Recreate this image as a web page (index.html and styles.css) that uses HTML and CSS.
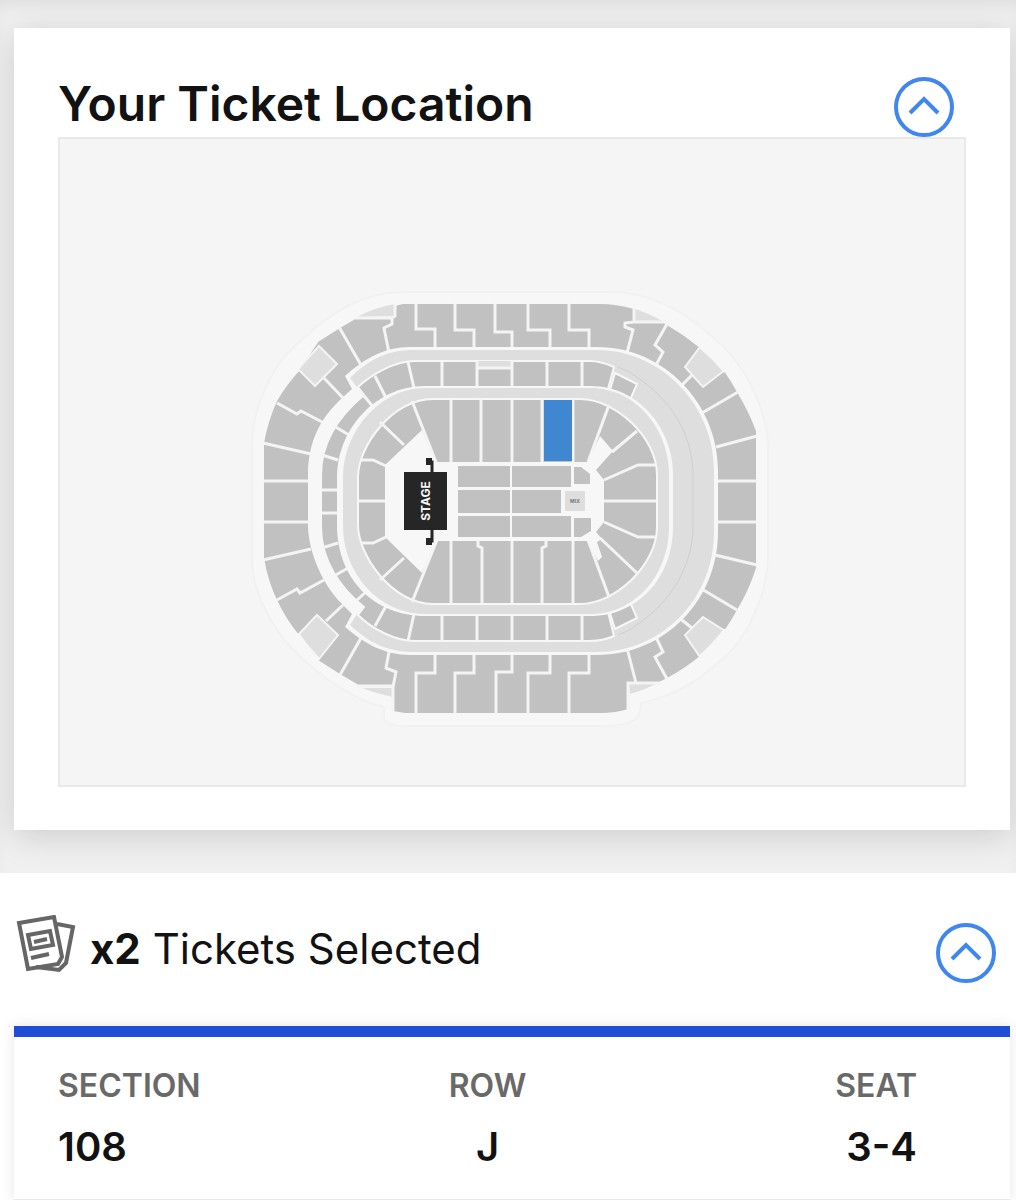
FILE: index.html
```html
<!DOCTYPE html>
<html lang="en">
<head>
  <meta charset="UTF-8">
  <meta name="viewport" content="width=device-width, initial-scale=1.0">
  <title>Your Tickets</title>
  <link rel="stylesheet" href="styles.css">
</head>
<body>
  <main>
    <div class="location-area">
      <section class="location-card">
        <div class="location-header">
          <h1>Your Ticket Location</h1>
          <button type="button" class="toggle" aria-label="Collapse ticket location">
            <svg viewBox="0 0 60 60"><circle cx="30" cy="30" r="28"/><path d="M16 36 L30 22 L44 36"/></svg>
          </button>
        </div>

        <div class="seat-map">
          <svg viewBox="60 139 904 646" role="img" aria-label="Seat map, section 108 highlighted">
            <!-- building outline -->
            <path class="building" d="M403 292 H612 C650 292 685 312 710 335 C745 362 768 410 768 450 V555 C768 590 750 640 715 665 C690 688 665 698 641 703 C642 716 635 726 605 726 H405 Q385 726 384 718 V707 C355 700 325 680 302 658 C270 630 252 590 252 560 V445 C252 405 275 360 302 340 C330 312 365 292 403 292 Z"/>

            <!-- upper bowl -->
            <path class="seats" d="M403 304 H600 Q616 304 634 309 Q652 315 667 325 Q684 335 700 348 Q713 359 724 371 Q731 381 737 392 Q749 412 756 431 V568 Q749 590 737 610 Q731 621 724 631 Q713 644 700 656 Q684 669 667 678 L655 684 H628 V709 Q616 713 600 713 H405 L393 711 V687 H362 L340 674 L318 660 Q307 648 299 635 Q286 619 278 602 Q268 582 264 558 V443 Q268 421 277 401 Q287 384 300 370 L318 342 L340 328 L357 318 L395 317 V306 Z"/>
            <g class="concourse">
              <path d="M357 317 Q376 307 395 304 V316 Z"/>
              <path d="M635 309 Q650 314 662 321 H635 Z"/>
              <path d="M362 688 H393 V697 Q377 694 362 688 Z"/>
              <path d="M629 684 H656 Q644 690 630 694 Z"/>
              <path class="cut" d="M319 346 L337 364 L315 386 L298 369 Z"/>
              <path class="cut" d="M317 615 L338 635 L319 659 L298 635 Z"/>
              <path class="cut" d="M700 347 L725 370 L703 387 L685 367 Z"/>
              <path class="cut" d="M703 617 L725 631 L700 657 L685 635 Z"/>
            </g>
            <!-- soft edge over the corner boxes -->
            <path class="apron" d="M316 341 Q305 354 296 370 M297 634 Q306 648 318 661 M701 346 Q714 357 726 371 M726 630 Q714 646 700 658"/>
            <g class="aisles">
              <path d="M416 303 V329 H435 V349 M455 303 V330 H474 V349 M495 303 V332 H512 V349 M528 303 V330 H550 V349 M569 303 V330 H589 V349"/>
              <path d="M395 304 V316 L392 318 V324 L384 328 L389 353 M355 318 H393 M339 327 L361 365 M324 378 L343 398"/>
              <path d="M277 403 L297 414 L301 411 L324 423 M263 443 L311 454 M263 481 H308 M263 522 H308 M263 560 L311 549 M277 600 L297 589 L300 593 L324 580"/>
              <path d="M326 621 L343 605 M361 638 L340 675 M389 652 L386 668 L396 672 L393 687 V711 M358 686 H393"/>
              <path d="M435 653 V673 H416 V714 M474 653 V673 H455 V714 M512 653 V672 H496 V714 M550 653 V673 H528 V714 M589 653 V673 H569 V714"/>
              <path d="M627 648 L636 683 M628 709 V683 H660 M655 635 L663 652 L655 657 L667 679 M678 617 L692 628 M700 588 L737 610 M715 555 L757 565 M718 522 H757"/>
              <path d="M716 447 L757 436 M718 481 H757 M702 413 L738 392 M680 387 L692 375 M667 324 L655 345 L663 352 L655 367 M634 308 V322 L625 323 V327 L633 330 L627 353 M633 322 H666"/>
            </g>

            <!-- club level -->
            <path class="gap" d="M410 347 H597 C665 347 718 405 718 470 V532 C718 600 665 655 597 655 H410 C385 655 365 644 345 627 L352 614 L342 604 C318 580 308 545 308 525 V475 C308 445 318 420 342 398 L352 389 L345 376 C365 358 385 347 410 347 Z"/>
            <path class="concourse" d="M350 378 C370 358 390 350 413 350 H597 C663 350 714 407 714 470 V532 C714 598 663 652 597 652 H413 C390 652 370 644 350 625 L357 614 H450 V387 H357 Z"/>
            <path class="seats ringed" d="M614 367 C605 363 595 361 590 361 H415 C395 361 372 374 358 387 L364 395 C340 415 321 440 321 475 V527 C321 560 340 588 364 607 L358 615 C372 629 395 641 415 641 H590 C595 641 605 640 614 636 L605 600 V400 Z"/>
            <path class="seats ringed" d="M615 373 L637 384 L630 400 L610 390 Z M610 613 L630 602 L637 618 L615 629 Z"/>
            <path class="concourse" d="M478 361 H511 V367 H478 Z"/>
            <g class="aisles">
              <path d="M408 362 L414 388 M442 361 V388 M477 361 V388 M477 368 H512 M512 361 V388 M547 361 V388 M582 361 V388"/>
              <path d="M408 641 L414 614 M442 614 V641 M477 614 V641 M512 614 V641 M547 614 V641 M582 614 V641"/>
              <path d="M375 376 L386 398 M360 391 L374 408 M334 426 L349 435 M322 455 L338 460 M321 490 H338 M321 513 H338 M322 548 L338 543 M334 576 L348 568 M357 600 L367 591 M375 626 L386 606"/>
            </g>
            <path class="rail" d="M618 367 Q630 371 641 380 C680 408 693 445 693 475 V527 C693 560 676 598 638 624 Q630 631 618 635"/>

            <!-- lower bowl -->
            <path class="gap" d="M425 386 H590 C640 386 673 430 673 475 V527 C673 575 640 616 590 616 H425 C375 616 337 580 337 525 V477 C337 430 375 386 425 386 Z"/>
            <path class="concourse" d="M425 388 H590 C637 388 669 430 669 475 V527 C669 573 637 614 590 614 H425 C380 614 343 575 343 525 V477 C343 432 380 388 425 388 Z"/>
            <path class="seats ringed" d="M433 399 H580 C615 399 657 437 657 475 V527 C657 565 615 604 580 604 H433 C392 604 358 555 358 525 V477 C358 447 392 399 433 399 Z"/>
            <g class="aisles">
              <path d="M412 401 L436 462 M451 399 V462 M481 399 V462 M512 399 V462 M542 399 V462 M573 399 V462 M609 405 L588 462 M637 431 L612 452 M656 465 H638 L604 480 M604 501 H656"/>
              <path d="M412 602 L437 540 M451 540 V604 M478 540 V546 L482 548 V604 M512 540 V604 M546 540 V546 L542 548 V604 M573 540 V604 M609 597 L588 540 M638 574 L600 538 M656 537 H638 L604 522"/>
              <path d="M380 422 L404 445 M361 460 H373 L386 466 M358 501 H385 M361 543 H373 L386 537 M380 580 L404 558"/>
            </g>

            <!-- floor -->
            <path class="gap" d="M385 465 L422 430 L435 462 H588 L600 436 L613 451 L596 470 L604 480 V522 L596 532 L602 539 L597 542 L602 557 L598 561 L588 541 H437 L422 573 L385 537 Z"/>
            <path class="seats" d="M458 466 H510 V487 H458 Z M512 466 H571 V487 H512 Z M458 490 H510 V513 H458 Z M512 490 H561 V513 H512 Z M458 516 H510 V537 H458 Z M512 516 H571 V537 H512 Z M574 467 H581 L590 474 V484 H574 Z M574 518 H591 V531 L581 537 H574 Z"/>
            <path class="concourse" d="M565 491 H585 V511 H565 Z"/>
            <text class="mix-label" x="575" y="503">MIX</text>

            <rect class="selected" x="544" y="400" width="28" height="61"/>

            <rect class="stage" x="404" y="472" width="43" height="58"/>
            <path class="stage-truss" d="M432 473 V462 H427 M432 529 V541 H427"/>
            <path class="stage" d="M426 458 h6 v7 h-6 Z M426 538 h6 v7 h-6 Z"/>
            <text class="stage-label" transform="translate(430 501) rotate(-90)">STAGE</text>
          </svg>
        </div>
      </section>
    </div>

    <section class="tickets">
      <div class="tickets-header">
        <svg class="ticket-icon" viewBox="0 0 60 60">
          <path d="M41 9 L57 12 L50 48 L43 55 L20 52"/>
          <path d="M3 8 L38 2 L46 42 L42 49 L12 54 Z"/>
          <path d="M12 20 L34 16 L37 30 L15 34 Z"/>
          <path d="M18 27 L31 24 M15 43 L33 39"/>
        </svg>
        <h2><strong>x2</strong> Tickets Selected</h2>
        <button type="button" class="toggle" aria-label="Collapse selected tickets">
          <svg viewBox="0 0 60 60"><circle cx="30" cy="30" r="28"/><path d="M16 36 L30 22 L44 36"/></svg>
        </button>
      </div>

      <div class="ticket-card">
        <table>
          <thead>
            <tr><th>SECTION</th><th>ROW</th><th>SEAT</th></tr>
          </thead>
          <tbody>
            <tr><td>108</td><td>J</td><td>3-4</td></tr>
          </tbody>
        </table>
      </div>
    </section>
  </main>
</body>
</html>
```
FILE: styles.css
```css
* {
  box-sizing: border-box;
}
body {
  font-family: Inter, "Liberation Sans", sans-serif;
  background-color: #fff;
  color: #121212;
  margin: 0;
}
h1, h2 {
  margin: 0;
}
.location-area {
  background-color: #f0f0f0;
  box-shadow: inset 0 12px 20px -10px rgba(0, 0, 0, 0.1);
  padding: 28px 6px 43px 14px;
  overflow: hidden;
}
.location-card {
  background-color: #fff;
  box-shadow: 0 6px 32px rgba(0, 0, 0, 0.15);
  padding: 0 44px 43px;
}
.location-header {
  display: flex;
  justify-content: space-between;
  align-items: flex-end;
  height: 109px;
  padding-right: 12px;
}
.location-header h1 {
  font-size: 48px;
  font-weight: 600;
  line-height: 66px;
}
.toggle {
  flex: none;
  width: 60px;
  height: 60px;
  border: none;
  padding: 0;
  background: none;
  cursor: pointer;
}
.toggle svg {
  display: block;
  fill: none;
  stroke: #3f87ee;
  stroke-width: 4;
}
.seat-map {
  background-color: #f5f5f5;
  border: 2px solid #e9e9e9;
}
.seat-map svg {
  display: block;
  width: 100%;
}
.building {
  fill: #f7f7f7;
  stroke: #f1f1f1;
  stroke-width: 2;
}
.seats {
  fill: #c1c1c1;
}
.ringed {
  stroke: #f7f7f7;
  stroke-width: 2;
}
.gap {
  fill: #f7f7f7;
}
.concourse {
  fill: #dedede;
}
.cut {
  stroke: #f4f4f4;
  stroke-width: 2;
}
.apron {
  fill: none;
  stroke: #f7f7f7;
  stroke-width: 5;
}
.aisles {
  fill: none;
  stroke: #f4f4f4;
  stroke-width: 3;
}
.rail {
  fill: none;
  stroke: #cfcfcf;
}
.selected {
  fill: #3f87d0;
}
.stage {
  fill: #262626;
}
.stage-truss {
  fill: none;
  stroke: #262626;
  stroke-width: 3;
}
.stage-label {
  fill: #f5f5f5;
  font-size: 12px;
  font-weight: 700;
  text-anchor: middle;
}
.mix-label {
  fill: #777;
  font-size: 5px;
  font-weight: 700;
  text-anchor: middle;
}
.tickets-header {
  display: flex;
  padding: 42px 20px 43px 16px;
}
.tickets-header h2 {
  flex: 1;
  font-size: 42px;
  font-weight: 400;
  line-height: 68px;
  margin-left: 14px;
}
.tickets-header strong {
  font-weight: 700;
}
.tickets-header .toggle {
  align-self: flex-end;
}
.ticket-icon {
  width: 60px;
  height: 60px;
  fill: none;
  stroke: #666;
  stroke-width: 4;
}
.ticket-card {
  margin: 0 6px 0 14px;
  padding: 24px 93px 16px 44px;
  border-top: 11px solid #1f4dd8;
  border-bottom: 1px solid #e8e8e8;
  box-shadow: 0 0 14px rgba(0, 0, 0, 0.1);
}
table {
  width: 100%;
  table-layout: fixed;
  border-collapse: collapse;
}
th, td {
  padding: 0;
  text-align: center;
}
th {
  color: #696969;
  font-size: 32px;
  font-weight: 600;
  line-height: 50px;
}
td {
  font-size: 40px;
  font-weight: 600;
  line-height: 72px;
}
th:first-child, td:first-child {
  text-align: left;
}
th:last-child, td:last-child {
  text-align: right;
}
```
